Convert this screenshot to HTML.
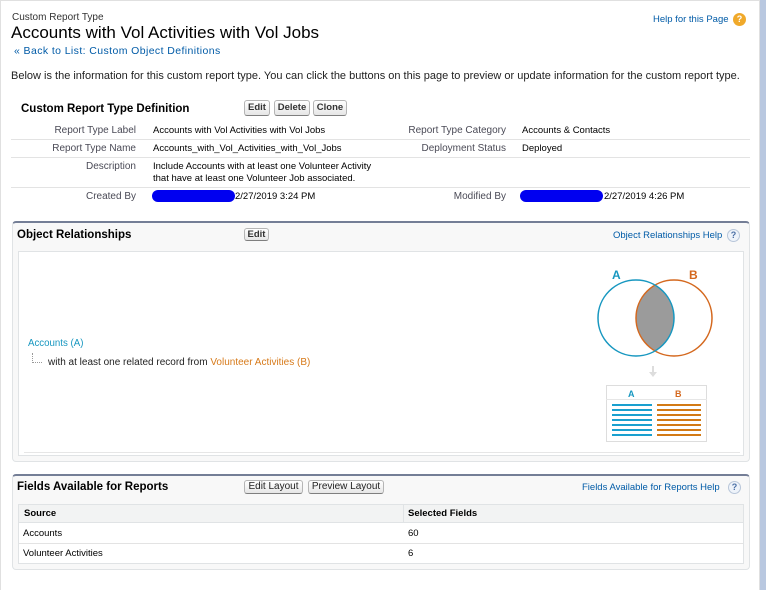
<!DOCTYPE html>
<html><head><style>
*{margin:0;padding:0;box-sizing:border-box}
body{width:766px;height:590px;position:relative;overflow:hidden;background:#fff;font-family:"Liberation Sans",Arial,sans-serif;color:#000}
.a{position:absolute;white-space:nowrap}
.l{font-size:10px;color:#4a4a56;text-align:right;width:200px}
.v{font-size:9.5px}
.hr{position:absolute;height:1px;background:#e3e3e3}
.btn{position:absolute;height:16px;border:1px solid #b5b5b5;border-bottom-color:#7f7f7f;border-radius:3px;background:linear-gradient(#fff,#e6e6e6);font-size:9.5px;font-weight:bold;color:#333;text-align:center;line-height:14px}
.link{color:#015ba7}
.q{position:absolute;width:13px;height:13px;border-radius:50%;border:1px solid #b8c6d9;background:#eef3fa;color:#4a6fa5;font-size:9px;font-weight:bold;text-align:center;line-height:11px}
.panel{position:absolute;left:12px;width:738px;background:#f8f8f8;border:1px solid #e0e3e5;border-top:2px solid #747e96;border-radius:4px}
.h2{font-size:11.5px;font-weight:bold}
</style></head><body>
<div style="position:absolute;left:0;top:0;width:760px;height:590px;border-left:1px solid #e0e0e0;border-top:1px solid #e0e0e0;border-right:1px solid #e0e0e0"></div>
<div style="position:absolute;left:760px;top:0;width:6px;height:590px;background:#b9c8e0"></div>

<div class="a" style="left:12px;top:12px;font-size:10px;color:#333">Custom Report Type</div>
<div class="a" style="left:11px;top:23px;font-size:17px">Accounts with Vol Activities with Vol Jobs</div>
<div class="a link" style="left:14px;top:45px;font-size:10.5px;letter-spacing:0.4px">« Back to List: Custom Object Definitions</div>
<div class="a link" style="left:653px;top:14px;font-size:9.5px">Help for this Page</div>
<div class="a" style="left:733px;top:13px;width:13px;height:13px;border-radius:50%;background:#f0a92a;color:#fff;font-size:9px;font-weight:bold;text-align:center;line-height:13px">?</div>
<div class="a" style="left:11px;top:70px;font-size:11px;color:#222">Below is the information for this custom report type. You can click the buttons on this page to preview or update information for the custom report type.</div>

<div class="a h2" style="left:21px;top:103px">Custom Report Type Definition</div>
<div class="btn" style="left:244px;top:100px;width:26px">Edit</div>
<div class="btn" style="left:274px;top:100px;width:36px">Delete</div>
<div class="btn" style="left:313px;top:100px;width:34px">Clone</div>

<div class="a l" style="left:-64px;top:125px">Report Type Label</div>
<div class="a v" style="left:153px;top:125px">Accounts with Vol Activities with Vol Jobs</div>
<div class="a l" style="left:306px;top:125px">Report Type Category</div>
<div class="a v" style="left:522px;top:125px">Accounts &amp; Contacts</div>
<div class="hr" style="left:11px;top:139px;width:739px"></div>
<div class="a l" style="left:-64px;top:143px">Report Type Name</div>
<div class="a v" style="left:153px;top:143px">Accounts_with_Vol_Activities_with_Vol_Jobs</div>
<div class="a l" style="left:306px;top:143px">Deployment Status</div>
<div class="a v" style="left:522px;top:143px">Deployed</div>
<div class="hr" style="left:11px;top:157px;width:739px"></div>
<div class="a l" style="left:-64px;top:161px">Description</div>
<div class="a v" style="left:153px;top:161px;line-height:12px">Include Accounts with at least one Volunteer Activity<br>that have at least one Volunteer Job associated.</div>
<div class="hr" style="left:11px;top:187px;width:739px"></div>
<div class="a l" style="left:-64px;top:191px">Created By</div>
<div class="a" style="left:152px;top:190px;width:83px;height:12px;background:#0000f0;border-radius:6px"></div>
<div class="a v" style="left:235px;top:191px">2/27/2019 3:24 PM</div>
<div class="a l" style="left:306px;top:191px">Modified By</div>
<div class="a" style="left:520px;top:190px;width:83px;height:12px;background:#0000f0;border-radius:6px"></div>
<div class="a v" style="left:604px;top:191px">2/27/2019 4:26 PM</div>

<div class="panel" style="top:221px;height:241px"></div>
<div class="a h2" style="left:17px;top:229px">Object Relationships</div>
<div class="btn" style="left:244px;top:228px;width:25px;height:13px;line-height:11px">Edit</div>
<div class="a link" style="left:613px;top:230px;font-size:9.5px">Object Relationships Help</div>
<div class="q" style="left:727px;top:229px">?</div>
<div class="a" style="left:18px;top:251px;width:726px;height:205px;background:#fff;border:1px solid #e0e3e5"></div>
<div class="hr" style="left:24px;top:452px;width:716px;background:#e6e6e6"></div>
<div class="a" style="left:28px;top:338px;font-size:9.7px;color:#1797c0">Accounts (A)</div>
<div class="a" style="left:32px;top:353px;width:10px;height:10px;border-left:1px dotted #999;border-bottom:1px dotted #999"></div>
<div class="a" style="left:48px;top:357px;font-size:10px;color:#222">with at least one related record from <span style="color:#d77a1a">Volunteer Activities (B)</span></div>
<svg class="a" style="left:590px;top:262px" width="130" height="185">
<text x="22" y="17" font-family="Liberation Sans" font-weight="bold" font-size="12" fill="#1797c0">A</text>
<text x="99" y="17" font-family="Liberation Sans" font-weight="bold" font-size="12" fill="#d4681e">B</text>
<defs><clipPath id="c"><circle cx="46" cy="56" r="38"/></clipPath></defs>
<circle cx="84" cy="56" r="38" fill="#9b9b9b" clip-path="url(#c)"/>
<circle cx="84" cy="56" r="38" fill="none" stroke="#d4681e" stroke-width="1.5"/>
<circle cx="46" cy="56" r="38" fill="none" stroke="#1797c0" stroke-width="1.5"/>
<path d="M62 104v6h-3l4 5 4-5h-3v-6z" fill="#ddd"/>
<rect x="16.5" y="123.5" width="100" height="56" fill="#fff" stroke="#ddd"/>
<line x1="16" y1="137.5" x2="117" y2="137.5" stroke="#e6e6e6"/>
<text x="38" y="135" font-family="Liberation Sans" font-weight="bold" font-size="9" fill="#1797c0">A</text>
<text x="85" y="135" font-family="Liberation Sans" font-weight="bold" font-size="9" fill="#d4681e">B</text>
<g stroke-width="2"><g stroke="#1aa0cf"><line x1="22" y1="143" x2="62" y2="143"/><line x1="22" y1="148" x2="62" y2="148"/><line x1="22" y1="153" x2="62" y2="153"/><line x1="22" y1="158" x2="62" y2="158"/><line x1="22" y1="163" x2="62" y2="163"/><line x1="22" y1="168" x2="62" y2="168"/><line x1="22" y1="173" x2="62" y2="173"/></g>
<g stroke="#d37a16"><line x1="67" y1="143" x2="111" y2="143"/><line x1="67" y1="148" x2="111" y2="148"/><line x1="67" y1="153" x2="111" y2="153"/><line x1="67" y1="158" x2="111" y2="158"/><line x1="67" y1="163" x2="111" y2="163"/><line x1="67" y1="168" x2="111" y2="168"/><line x1="67" y1="173" x2="111" y2="173"/></g></g>
</svg>

<div class="panel" style="top:474px;height:96px"></div>
<div class="a h2" style="left:17px;top:481px">Fields Available for Reports</div>
<div class="btn" style="left:244px;top:480px;width:59px;height:14px;line-height:12px;font-weight:normal;color:#222;font-size:10px">Edit Layout</div>
<div class="btn" style="left:308px;top:480px;width:76px;height:14px;line-height:12px;font-weight:normal;color:#222;font-size:10px">Preview Layout</div>
<div class="a link" style="left:582px;top:482px;font-size:9.5px">Fields Available for Reports Help</div>
<div class="q" style="left:728px;top:481px">?</div>
<div class="a" style="left:18px;top:504px;width:726px;height:60px;background:#fff;border:1px solid #e0e3e5"></div>
<div class="a" style="left:19px;top:505px;width:724px;height:18px;background:#f2f3f3;border-bottom:1px solid #e0e3e5"></div>
<div class="a" style="left:403px;top:505px;width:1px;height:18px;background:#e0e3e5"></div>
<div class="hr" style="left:19px;top:543px;width:724px"></div>
<div class="a" style="left:24px;top:508px;font-size:9.5px;font-weight:bold">Source</div>
<div class="a" style="left:408px;top:508px;font-size:9.5px;font-weight:bold">Selected Fields</div>
<div class="a" style="left:23px;top:528px;font-size:9.5px">Accounts</div>
<div class="a" style="left:408px;top:528px;font-size:9.5px">60</div>
<div class="a" style="left:23px;top:548px;font-size:9.5px">Volunteer Activities</div>
<div class="a" style="left:408px;top:548px;font-size:9.5px">6</div>
</body></html>
